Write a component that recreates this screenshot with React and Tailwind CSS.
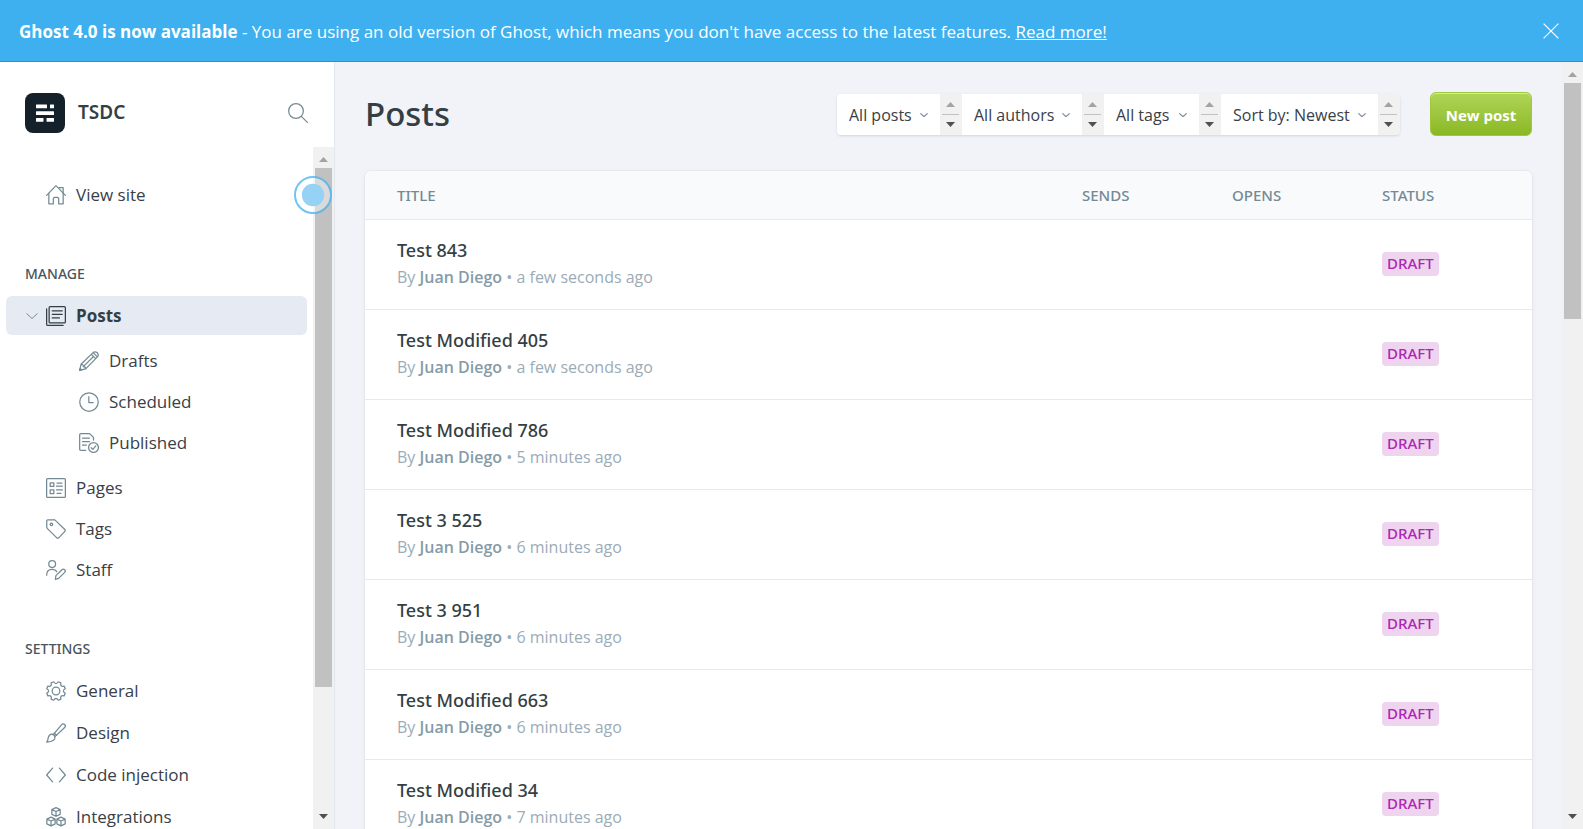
import React from "react";

const posts = [
  { title: "Test 843", when: "a few seconds ago" },
  { title: "Test Modified 405", when: "a few seconds ago" },
  { title: "Test Modified 786", when: "5 minutes ago" },
  { title: "Test 3 525", when: "6 minutes ago" },
  { title: "Test 3 951", when: "6 minutes ago" },
  { title: "Test Modified 663", when: "6 minutes ago" },
  { title: "Test Modified 34", when: "7 minutes ago" },
];

// Outline of an eight-toothed gear centred in a 24-unit box.
function cogPath() {
  const at = (angle, r) => `${(12 + r * Math.cos(angle)).toFixed(2)} ${(12 + r * Math.sin(angle)).toFixed(2)}`;
  const step = Math.PI / 4;
  let d = "";
  for (let i = 0; i < 8; i++) {
    const mid = (i + 0.5) * step;
    d += `${i === 0 ? "M" : "L"}${at(mid - 0.15, 11.4)}L${at(mid + 0.15, 11.4)}`;
    d += `C${at(mid + 0.26, 8.2)} ${at(mid + step - 0.26, 8.2)} ${at(mid + step - 0.15, 11.4)}`;
  }
  return `${d}Z`;
}

const icons = {
  home: (
    <>
      <path d="M.75 12.4 11.1 1.6a1.2 1.2 0 0 1 1.8 0l10.35 10.8" />
      <path d="M3.4 10v12.5h5.4v-6.2a1.5 1.5 0 0 1 1.5-1.5h3.4a1.5 1.5 0 0 1 1.5 1.5v6.2h5.4V10" />
      <path d="M15.8 3.2h4.8v6" />
    </>
  ),
  posts: (
    <>
      <rect x="3.75" y=".75" width="19.5" height="19.5" rx="1.2" />
      <path d="M.75 3.5v18.25a1.5 1.5 0 0 0 1.5 1.5h18.25M7.5 5.8h12M7.5 10h12M7.5 14.3h8.6" />
    </>
  ),
  pencil: (
    <>
      <path d="M.75 23.25l1.7-7.3L16.9 1.9a3.7 3.7 0 0 1 5.2 5.2L8 21.5zM2.45 15.95c2.2 0 2.8.8 2.8 2.8 2 0 2.75.8 2.75 2.75M14.8 4l5.2 5.2M16.9 1.9l5.2 5.2M5.2 18.7 17.4 6.6" />
      <path d="M.75 23.25l2.2-.6-1.6-1.6z" />
    </>
  ),
  clock: (
    <>
      <circle cx="12" cy="12" r="11.1" />
      <path d="M11.8 5.6v7h5.2" />
    </>
  ),
  published: (
    <>
      <path d="M8 20.8H2.2a1.4 1.4 0 0 1-1.4-1.4V2.2A1.4 1.4 0 0 1 2.2.8h10.6l4.6 4.6v3M4.2 6h8.5M4.2 10.3h8.5M4.2 14.6h4.6" />
      <circle cx="17.4" cy="17.4" r="5.9" />
      <path d="m14.6 17.7 2 2 3.6-4.2" />
    </>
  ),
  pages: (
    <>
      <rect x=".75" y=".75" width="22.5" height="22.5" rx="1.2" />
      <path d="M5 5.7h4.4v4.4H5zM5 14.3h4.4v4.4H5zM13.2 6h6M12.6 9.8h7M12.6 14.3h7M13.2 18.4h4.8" />
    </>
  ),
  tag: (
    <>
      <path d="M2.2.9h7.2a2.6 2.6 0 0 1 1.8.7l11.4 11a1.6 1.6 0 0 1 0 2.2l-7.4 7.8a1.6 1.6 0 0 1-2.2 0L1.7 11.5a2.6 2.6 0 0 1-.8-1.8V2.3A1.4 1.4 0 0 1 2.2.9z" />
      <circle cx="6.5" cy="6.3" r="1.5" />
    </>
  ),
  staff: (
    <>
      <circle cx="7.4" cy="4.9" r="4.1" />
      <path d="M.75 18.2c0-4.4 2.6-7 6.6-7 2.6 0 4.6 1.1 5.6 2.9" />
      <path d="m11.2 23.2.7-4.4 7.3-7.1a2.2 2.2 0 0 1 3.2 3.2l-7.2 7.2z" />
    </>
  ),
  cog: (
    <>
      <path d={cogPath()} />
      <circle cx="12" cy="12" r="4.6" />
    </>
  ),
  brush: (
    <>
      <path d="M8.4 14.2 18.8 1.9a2.5 2.5 0 0 1 3.6 3.5L10.7 16.4" />
      <path d="M8.4 13.6a4.2 4.2 0 0 1 2.3 2.8c.6 3.2-1.8 6.4-9.9 6.4 2-1.7 1.2-3.3 1.9-5.4.8-2.6 3-4.5 5.7-3.8zM10 12.3l2.8 2.5" />
    </>
  ),
  code: <path d="M7.9 3.7.8 12l7.1 8.3M16.1 3.7l7.1 8.3-7.1 8.3" />,
  modules: (
    <>
      <path d="m12 .8 5 2.3v5.7l-5 2.3-5-2.3V3.1zM7 3.1l5 2.3 5-2.3M12 5.4v5.7" />
      <path d="m6 12.2 5 2.3v5.7l-5 2.5-5-2.5v-5.7zM1 14.5l5 2.3 5-2.3M6 16.8v5.9" />
      <path d="m18 12.2 5 2.3v5.7l-5 2.5-5-2.5v-5.7zM13 14.5l5 2.3 5-2.3M18 16.8v5.9" />
    </>
  ),
  search: (
    <>
      <circle cx="9.6" cy="9.6" r="8.8" />
      <path d="m16 16 7.3 7.3" />
    </>
  ),
};

function Icon({ name, className = "text-[#738a94]" }) {
  return (
    <svg
      viewBox="0 0 24 24"
      className={`size-5 shrink-0 ${className}`}
      fill="none"
      stroke="currentColor"
      strokeWidth="1.5"
      strokeLinecap="round"
      strokeLinejoin="round"
      aria-hidden="true"
    >
      {icons[name]}
    </svg>
  );
}

function Chevron({ className }) {
  return (
    <svg viewBox="0 0 12 6" className={className} fill="none" stroke="currentColor" aria-hidden="true">
      <path d="M.5.5 6 5.5 11.5.5" />
    </svg>
  );
}

function Arrow({ down }) {
  return (
    <svg viewBox="0 0 9 5" className={`h-[5px] w-[9px] ${down ? "text-[#505050]" : "text-[#a3a3a3]"}`} fill="currentColor" aria-hidden="true">
      <path d={down ? "M0 0h9L4.5 5z" : "M0 5h9L4.5 0z"} />
    </svg>
  );
}

function Scrollbar({ thumb }) {
  return (
    <div className="flex w-[21px] shrink-0 flex-col bg-[#f1f1f1]" aria-hidden="true">
      <div className="flex h-[21px] items-center justify-center pt-1">
        <Arrow />
      </div>
      <div className="flex-1 px-0.5">
        <div className={`w-full bg-[#c1c1c1] ${thumb}`} />
      </div>
      <div className="flex h-[22px] items-center justify-center pb-1">
        <Arrow down />
      </div>
    </div>
  );
}

function NavItem({ icon, children, sub }) {
  return (
    <li>
      <a href="#" className={`flex h-[39px] items-center gap-2.5 rounded-md text-[17px] text-[#394047] ${sub ? "pl-[73px]" : "pl-10"}`}>
        <Icon name={icon} />
        {children}
      </a>
    </li>
  );
}

function Filter({ label, text, width }) {
  return (
    <div className="flex">
      <div className={`relative bg-white ${width}`}>
        <select
          aria-label={label}
          className="h-full w-full appearance-none bg-transparent pl-3 pt-0.5 font-['Open_Sans','Noto_Sans',sans-serif] text-base text-[#394047] outline-none"
        >
          <option>{text}</option>
        </select>
        <Chevron className="pointer-events-none absolute right-3 top-[19px] h-1 w-2 text-[#7c8b9a] [stroke-width:1.8]" />
      </div>
      <div className="flex w-[22px] flex-col items-center justify-between bg-[#f1f1f1] py-2 pr-px" aria-hidden="true">
        <Arrow />
        <div className="h-px w-[17px] bg-[#c1c1c1]" />
        <Arrow down />
      </div>
    </div>
  );
}

function GroupHeading({ children }) {
  return (
    <h2 className="mb-3 mt-[50px] pl-[19px] font-['Noto_Sans','Open_Sans',sans-serif] text-sm font-medium leading-5 text-[#4a555b]">
      {children}
    </h2>
  );
}

function Sidebar() {
  return (
    <nav className="relative flex w-[335px] shrink-0 flex-col border-r border-[#e3e8ef] bg-white">
      <div className="flex h-[85px] shrink-0 items-center pl-[25px] pr-[26px] pt-4">
        <svg viewBox="0 0 40 40" className="size-10" aria-hidden="true">
          <rect width="40" height="40" rx="8" fill="#15212a" />
          <g fill="#fff">
            <rect x="11" y="11.5" width="11" height="3.7" rx=".5" />
            <rect x="25" y="11.5" width="4" height="3.7" rx=".5" />
            <rect x="11" y="18.2" width="18" height="3.7" rx=".5" />
            <rect x="11" y="25" width="7.5" height="3.7" rx=".5" />
            <rect x="21.5" y="25" width="7.5" height="3.7" rx=".5" />
          </g>
        </svg>
        <span className="ml-[13px] flex-1 font-['Noto_Sans','Open_Sans',sans-serif] text-[19px] font-semibold text-[#343f44]">TSDC</span>
        <button type="button" aria-label="Search">
          <Icon name="search" />
        </button>
      </div>
      <div className="flex min-h-0 flex-1">
        <div className="min-w-0 flex-1 overflow-hidden px-1.5 pt-7">
          <ul>
            <NavItem icon="home">View site</NavItem>
          </ul>
          <GroupHeading>MANAGE</GroupHeading>
          <a href="#" className="flex h-[39px] items-center rounded-md bg-[#e5eaf3] pl-5 text-[17px] font-bold text-[#343f44]">
            <Chevron className="h-1.5 w-3 text-[#7c8b9a]" />
            <Icon name="posts" className="ml-2 text-[#343f44]" />
            <span className="ml-2.5">Posts</span>
          </a>
          <ul className="flex flex-col gap-0.5 py-1.5">
            <NavItem icon="pencil" sub>Drafts</NavItem>
            <NavItem icon="clock" sub>Scheduled</NavItem>
            <NavItem icon="published" sub>Published</NavItem>
          </ul>
          <ul className="flex flex-col gap-0.5">
            <NavItem icon="pages">Pages</NavItem>
            <NavItem icon="tag">Tags</NavItem>
            <NavItem icon="staff">Staff</NavItem>
          </ul>
          <GroupHeading>SETTINGS</GroupHeading>
          <ul className="flex flex-col gap-[3px]">
            <NavItem icon="cog">General</NavItem>
            <NavItem icon="brush">Design</NavItem>
            <NavItem icon="code">Code injection</NavItem>
            <NavItem icon="modules">Integrations</NavItem>
          </ul>
        </div>
        <Scrollbar thumb="h-13/16" />
      </div>
      <svg viewBox="0 0 40 40" className="absolute right-px top-[113px] size-10" aria-hidden="true">
        <circle cx="20" cy="20" r="18" fill="#fff" fillOpacity=".4" stroke="#3eb0ef" strokeOpacity=".75" strokeWidth="2" />
        <circle cx="20" cy="20" r="11.2" fill="#96d2f5" />
      </svg>
    </nav>
  );
}

export default function App() {
  return (
    <div className="flex h-screen flex-col overflow-hidden bg-[#f1f3f8] font-['Open_Sans','Noto_Sans',sans-serif]">
      <div className="flex h-[62px] shrink-0 items-center justify-between border-b border-[#1d97dc] bg-[#3eb0ef] pl-[19px] pr-6 text-[17px] text-white">
        <p className="pt-0.5">
          <strong className="font-bold">Ghost 4.0 is now available</strong> - You are using an old version of Ghost, which means you don't have access to the latest features.{" "}
          <a href="#" className="underline">Read more!</a>
        </p>
        <button type="button" aria-label="Close">
          <svg viewBox="0 0 16 16" className="size-4" fill="none" stroke="currentColor" strokeWidth="1.2" aria-hidden="true">
            <path d="m.6.6 14.8 14.8M15.4.6.6 15.4" />
          </svg>
        </button>
      </div>

      <div className="flex min-h-0 flex-1">
        <Sidebar />
        <main className="min-w-0 flex-1 overflow-hidden px-[30px]">
          <header className="flex h-[109px] items-center pb-[5px]">
            <h1 className="flex-1 font-['Noto_Sans','Open_Sans',sans-serif] text-[33px] font-medium leading-10 text-[#343f44]">Posts</h1>
            <div className="flex h-[41px] overflow-hidden rounded shadow-sm">
              <Filter label="Post type" text="All posts" width="w-[103px]" />
              <Filter label="Author" text="All authors" width="w-[120px]" />
              <Filter label="Tag" text="All tags" width="w-[95px]" />
              <Filter label="Order" text="Sort by: Newest" width="w-[157px]" />
            </div>
            <a
              href="#"
              className="ml-[30px] flex h-11 w-[102px] items-center justify-center rounded-md border border-[#a1c63c] bg-linear-to-b from-[#b0d556] to-[#8ab822] pt-0.5 text-[15px] font-bold text-white shadow-[inset_0_1px_0_rgba(255,255,255,0.5)]"
            >
              New post
            </a>
          </header>

          <table className="w-full table-fixed border-separate border-spacing-0 overflow-hidden rounded-md bg-white text-left shadow-[0_0_2px_rgba(0,0,0,0.12),0_2px_6px_rgba(0,0,0,0.04)]">
            <thead>
              <tr className="h-[49px] bg-[#f9fafc] font-['Noto_Sans','Open_Sans',sans-serif] text-[15px] text-[#738a94]">
                <th className="border-b border-[#e3ebf2] pl-8 font-medium">TITLE</th>
                <th className="w-[150px] border-b border-[#e3ebf2] font-medium">SENDS</th>
                <th className="w-[150px] border-b border-[#e3ebf2] font-medium">OPENS</th>
                <th className="w-[150px] border-b border-[#e3ebf2] font-medium">STATUS</th>
              </tr>
            </thead>
            <tbody>
              {posts.map((post) => (
                <tr key={post.title} className="h-[90px]">
                  <td className="border-b border-[#e3ebf2] pb-[3px] pl-8">
                    <h3 className="font-['Noto_Sans','Open_Sans',sans-serif] text-lg font-medium leading-7 text-[#343f44]">{post.title}</h3>
                    <p className="text-base leading-[26px] text-[#9bacb6]">
                      By <span className="font-semibold text-[#859ba7]">Juan Diego</span> • {post.when}
                    </p>
                  </td>
                  <td className="border-b border-[#e3ebf2]" />
                  <td className="border-b border-[#e3ebf2]" />
                  <td className="border-b border-[#e3ebf2] pb-0.5">
                    <span className="inline-flex h-6 items-center rounded bg-[#eed4ee] px-[5px] font-['Noto_Sans','Open_Sans',sans-serif] text-[15px] font-medium text-[#ad26b4]">DRAFT</span>
                  </td>
                </tr>
              ))}
            </tbody>
          </table>
        </main>
        <Scrollbar thumb="h-[236px]" />
      </div>
    </div>
  );
}
